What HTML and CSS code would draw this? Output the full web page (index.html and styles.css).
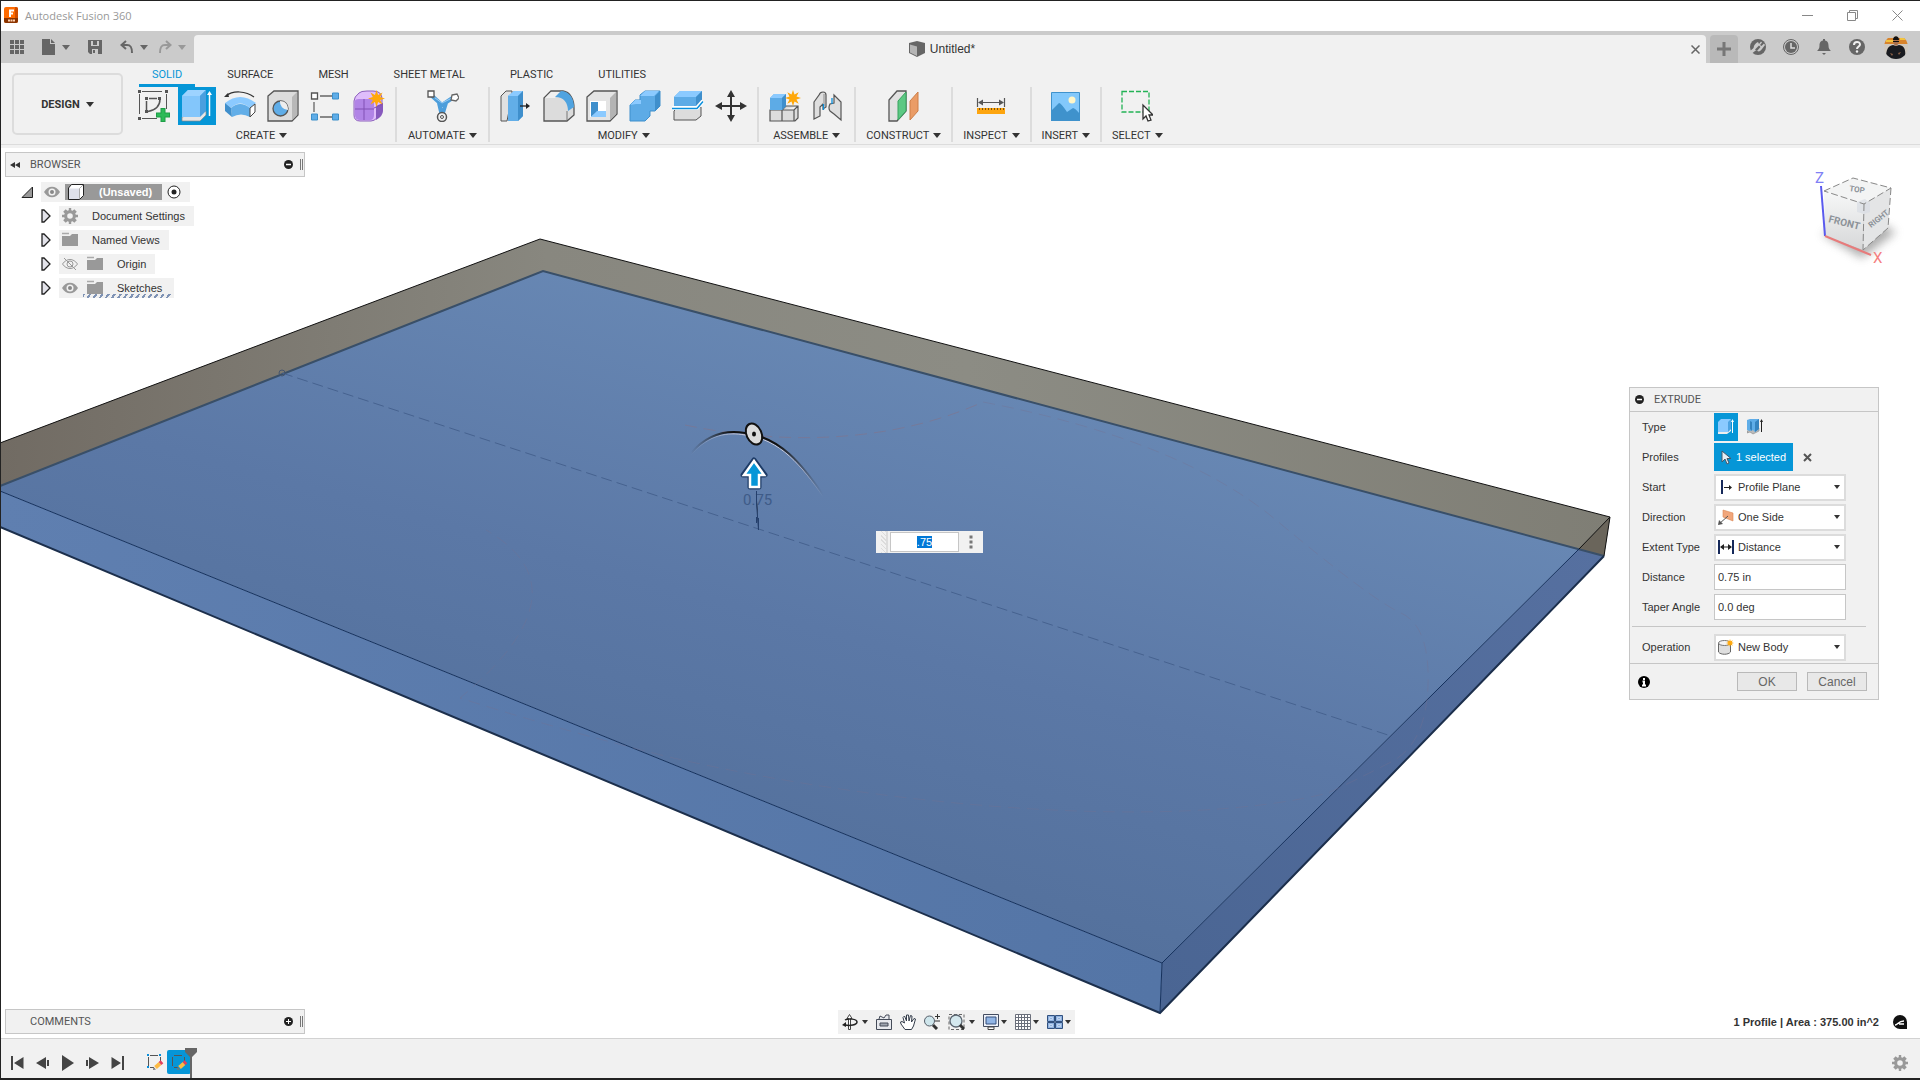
FILE: index.html
```html
<!DOCTYPE html>
<html lang="en">
<head>
    <meta charset="UTF-8">
    <meta name="viewport" content="width=device-width, initial-scale=1.0">
    <title>Autodesk Fusion 360</title>
    <link rel="stylesheet" href="styles.css">
</head>
<body>
    <!-- shared icons -->
    <svg class="defs" width="0" height="0" aria-hidden="true">
        <symbol id="gear" viewBox="0 0 16 16">
            <path fill-rule="evenodd" fill="#999" d="M6.8 0h2.4v2.2l1.4.6L12.300 1.200 14.800 3.700 13.200 5.400l.6 1.400H16v2.400h-2.200l-.6 1.400 1.600 1.700-2.500 2.500-1.700-1.600-1.400.6V16H6.800v-2.200l-1.400-.6-1.700 1.600-2.500-2.500 1.600-1.700-.6-1.400H0V6.800h2.200l.6-1.400L1.200 3.700l2.500-2.500 1.700 1.600 1.400-.6zM8 5.200a2.800 2.800 0 1 0 0 5.600 2.800 2.800 0 0 0 0-5.600z"/>
        </symbol>
        <symbol id="folder" viewBox="0 0 16 16">
            <path fill="#999" d="M0 4h8l2-2h6v12H0z"/>
            <path stroke="#aaa" stroke-width="1.500" d="M0 1.500h7"/>
        </symbol>
        <symbol id="eye" viewBox="0 0 16 16">
            <path fill="#999" d="M0 8c4-7 12-7 16 0-4 7-12 7-16 0z"/>
            <circle cx="8" cy="8" r="3.500" fill="#f1f1f1"/>
            <circle cx="8" cy="8" r="2" fill="#888"/>
        </symbol>
        <symbol id="branch" viewBox="0 0 10 14">
            <path fill="#e3e3ea" stroke="#222" stroke-width="1.300" d="M1 1h2l6 6-6 6H1z"/>
        </symbol>
        <symbol id="star" viewBox="0 0 16 16">
            <path fill="#ffa80a" d="M8 0l1.500 4.600 4.200-2.300-2.200 4.200L16 8l-4.500 1.500 2.200 4.200-4.200-2.300L8 16l-1.500-4.600-4.200 2.300 2.200-4.200L0 8l4.500-1.500-2.200-4.200 4.200 2.300z"/>
        </symbol>
        <symbol id="pencil-sketch" viewBox="0 0 18 18">
            <path fill="none" stroke="#555" d="M2.500 4v9M4 2.500h8M14.500 4v4M4 14.500h4"/>
            <path fill="#0a8fdc" d="M1 1h2v2H1zM13 1h2v2h-2zM1 13h2v2H1z"/>
            <path stroke="#fdbb45" stroke-width="4" d="M9.500 14.500l4.500-4"/>
            <path stroke="#e1405c" stroke-width="4" d="M14 10.500l2-1.800"/>
            <path fill="#777" d="M7 17l.5-3 2.500 2.500z"/>
        </symbol>
    </svg>

    <header class="titlebar">
        <svg class="logo" width="14" height="16" viewBox="0 0 14 16">
            <rect width="14" height="16" rx="2" fill="#ff6b00"/>
            <path fill="#8a3300" d="M0 11h14v3a2 2 0 0 1-2 2H2a2 2 0 0 1-2-2z"/>
            <path fill="#cf4d00" d="M11 0h1a2 2 0 0 1 2 2v9h-3z"/>
            <path fill="none" stroke="#fff" stroke-width="2" d="M6 10V3.500h4M6 6.500h3"/>
            <path stroke="#ffd2b0" stroke-width="2" stroke-dasharray="2 .5" d="M4 13.500h7"/>
        </svg>
        <h1>Autodesk Fusion 360</h1>
        <div class="window-controls">
            <button aria-label="Minimize"><svg width="11" height="11" viewBox="0 0 11 11"><path d="M0 5.500h11"/></svg></button>
            <button aria-label="Restore"><svg width="11" height="11" viewBox="0 0 11 11"><path d="M.5 2.500h8v8h-8zM2.500 2.500v-2h8v8h-2"/></svg></button>
            <button aria-label="Close"><svg width="11" height="11" viewBox="0 0 11 11"><path d="M.5.500l10 10M10.500.500l-10 10"/></svg></button>
        </div>
    </header>

    <nav class="appbar">
        <div class="quick">
            <button class="quick-button" aria-label="Data panel">
                <svg width="14" height="14" viewBox="0 0 14 14"><path fill="#666" d="M0 0h4v4H0zM5 0h4v4H5zM10 0h4v4h-4zM0 5h4v4H0zM5 5h4v4H5zM10 5h4v4h-4zM0 10h4v4H0zM5 10h4v4H5zM10 10h4v4h-4z"/></svg>
            </button>
            <button class="quick-button" aria-label="File">
                <svg width="14" height="16" viewBox="0 0 14 16"><path fill="#666" d="M0 0h8v5h5v11H0zM9 0l4 4H9z"/></svg>
                <span class="caret"></span>
            </button>
            <button class="quick-button" aria-label="Save">
                <svg width="14" height="14" viewBox="0 0 14 14"><path fill="#666" d="M0 0h14v14H2l-2-2z"/><path fill="#cbcbcb" d="M3 1h8v5H3zM4 9h6v5H4z"/><path fill="#666" d="M5 1h4v4H5zM5 10h2v3H5z"/></svg>
            </button>
            <div class="history">
                <button class="quick-button" aria-label="Undo">
                    <svg width="14" height="14" viewBox="0 0 14 14"><path fill="none" stroke="#666" stroke-width="2" d="M6 1L1.500 5 6 9M2 5h5c4 0 5 2.500 5 8"/></svg>
                    <span class="caret"></span>
                </button>
                <button class="quick-button" aria-label="Redo" disabled>
                    <svg width="14" height="14" viewBox="0 0 14 14"><path fill="none" stroke="#999" stroke-width="2" d="M8 1l4.500 4L8 9M12 5H7c-4 0-5 2.500-5 8"/></svg>
                    <span class="caret light"></span>
                </button>
            </div>
        </div>
        <div class="doc-tab">
            <span class="doc-name">
                <svg width="16" height="16" viewBox="0 0 16 16"><path fill="#666" d="M0 2l8-2 8 2v10l-8 4-8-4z"/><path fill="#b5b5b5" d="M1 3.500l7 2V15l-7-3.500z"/></svg>
                Untitled*
            </span>
            <button class="tab-close" aria-label="Close tab"><svg width="9" height="9" viewBox="0 0 9 9"><path stroke="#666" stroke-width="1.500" d="M.5.500l8 8M8.500.500l-8 8"/></svg></button>
        </div>
        <button class="new-tab" aria-label="New tab"><svg width="14" height="14" viewBox="0 0 14 14"><path stroke="#777" stroke-width="3" d="M7 0v14M0 7h14"/></svg></button>
        <div class="account">
            <button aria-label="Extensions">
                <svg width="16" height="16" viewBox="0 0 16 16"><circle cx="8" cy="8" r="8" fill="#666"/><path stroke="#cbcbcb" stroke-width="3" d="M0 14l5-4"/><path fill="#cbcbcb" d="M4 12c-1-4 0-7 4-9l1 2 2-2.500 1 1L10 6l1.500 1L14 4.500l1 1.500-3 4c-2 3-4 3-6 1z"/><path fill="#666" d="M5 10.500l4-4 1.500 1.500L7 12z"/></svg>
            </button>
            <button aria-label="Job status">
                <svg width="16" height="16" viewBox="0 0 16 16"><circle cx="8" cy="8" r="7.500" fill="none" stroke="#666"/><circle cx="8" cy="8" r="6" fill="#666"/><path fill="none" stroke="#ddd" stroke-width="1.500" d="M8 4v5h4"/></svg>
            </button>
            <button aria-label="Notifications">
                <svg width="16" height="16" viewBox="0 0 16 16"><path fill="#666" d="M7 0h2v1.500c3 .5 3.500 3 3.500 5 0 3 1 4 2.500 5.500H1c1.500-1.500 2.500-2.500 2.500-5.500 0-2 .5-4.500 3.500-5zM6 14h4l-2 2z"/></svg>
            </button>
            <button aria-label="Help">
                <svg width="16" height="16" viewBox="0 0 16 16"><circle cx="8" cy="8" r="8" fill="#666"/><path fill="none" stroke="#eee" stroke-width="2" d="M5 6c0-4 6-4 6-.5 0 2-3 2-3 4.500"/><circle cx="8" cy="12.500" r="1.200" fill="#eee"/></svg>
            </button>
            <button class="avatar" aria-label="Account">
                <svg width="24" height="24" viewBox="0 0 24 24">
                    <clipPath id="round"><circle cx="12" cy="12" r="12"/></clipPath>
                    <g clip-path="url(#round)">
                        <path fill="#cfc9c0" d="M0 0h24v24H0z"/><path fill="#d8842c" d="M0 3h24v6H0z"/><path fill="#f3c33e" d="M2 5h7v2H2zM16 3h7v2h-7z"/>
                        <path fill="#191b20" d="M2 24c0-10 2-13 7-14l3 1 3-1c6 1 7 5 6 14z"/>
                        <path fill="#a9714e" d="M9.500 5h5v4L12 11 9.500 9z"/><path fill="#111" d="M9 5c0-5 6-5 6 0zM9 6h6v1H9z"/>
                        <path fill="#8f6248" d="M6 18l3 1-1 2zM17 17l-3 1 1 2z"/>
                    </g>
                </svg>
            </button>
        </div>
    </nav>

    <section class="toolbar">
        <button class="workspace">DESIGN <span class="caret dark"></span></button>
        <div class="ribbon">
            <div class="tabs">
                <button class="tab active">SOLID</button>
                <button class="tab">SURFACE</button>
                <button class="tab">MESH</button>
                <button class="tab">SHEET METAL</button>
                <button class="tab">PLASTIC</button>
                <button class="tab">UTILITIES</button>
            </div>
            <div class="groups">
                <div class="group">
                    <div class="tools">
                        <button class="tool" aria-label="Create sketch">
                            <svg viewBox="0 0 32 32"><path fill="none" stroke="#555" stroke-dasharray="20 4" d="M1.500 4v22M4 1.500h22M28.500 4v15M4 28.500h15"/><path fill="none" stroke="#555" stroke-width="1.500" d="M8.500 11v9M11 8.500h8M22 9c0 6-4 11-12 12.500"/><path fill="#555" d="M0 0h3v3H0zM27 0h3v3h-3zM0 27h3v3H0zM7 7h3v3H7zM20 7h3v3h-3zM7 20h3v3H7z"/><path stroke="#1e9e47" stroke-width="5" d="M25 18v14M18 25h14"/><path stroke="#2dba58" stroke-width="3" d="M25 19v12M19 25h12"/></svg>
                        </button>
                        <button class="tool active" aria-label="Extrude">
                            <svg viewBox="0 0 32 32"><path fill="#e6e6e6" stroke="#888" stroke-width=".7" d="M1 27v4h18l6-6v-4z"/><path fill="#83c6fb" d="M1 6l6-6h18l-6 6v21H1z"/><path fill="#9dd3ff" d="M1 6l6-6h18l-6 6z"/><path fill="#4a9fdf" d="M19 6l6-6v21l-6 6z"/><path stroke="#fff" stroke-width="1.500" d="M28.500 26V3"/><path fill="#fff" d="M26 5l2.500-4L31 5z"/></svg>
                        </button>
                        <button class="tool" aria-label="Revolve">
                            <svg viewBox="0 0 32 32"><path fill="none" stroke="#333" stroke-width="1.200" d="M2 6C9 0 22 1 30 7"/><path fill="#333" d="M0 7l4-4 1 4z"/><path fill="#8bcaff" d="M1 13Q16 1 32 13l-6 5Q16 9 7 18z"/><path fill="#62aee8" d="M7 18q9-8 19 0v9q-9-5-18 0z"/><path fill="#3f8fcc" d="M1 13l6 5 1 9-7-6z"/><path fill="#fff" stroke="#444" d="M26 18l5-4v8l-5 5z"/></svg>
                        </button>
                        <button class="tool" aria-label="Hole">
                            <svg viewBox="0 0 32 32"><path fill="#dcdcdc" stroke="#555" stroke-width="1.300" d="M1 6l6-5h24v24l-6 6H1z"/><path fill="#b8b8b8" d="M25 7l5-5v23l-5 5z"/><circle cx="13.500" cy="18.500" r="7.500" fill="#5fade8" stroke="#555" stroke-width="1.300"/><path fill="#eee" d="M13 11a8 8 0 0 0 8 9c0-6-3-9-8-9z"/></svg>
                        </button>
                        <button class="tool" aria-label="Pattern">
                            <svg viewBox="0 0 32 32"><path stroke="#666" stroke-width="1.300" d="M10 6h12M4 12v10M10 27h12"/><path fill="#fff" stroke="#555" stroke-width="1.300" d="M1.500 3h6v6h-6z"/><path fill="#5fade8" stroke="#3d8fc9" d="M22.500 3h6v6h-6zM1.500 24h6v6h-6zM22.500 24h6v6h-6z"/></svg>
                        </button>
                        <button class="tool" aria-label="Create form">
                            <svg viewBox="0 0 32 32"><path fill="#dfbdfb" stroke="#8c60bd" d="M1 11q0-4 5-8 2-2 8-2h6q9 0 9 8v11q0 5-5 8-3 3-6 3H7q-6 0-6-6z"/><path fill="#b184e6" d="M2 11q0-2 4-2h11q4 0 4 4v12q0 5-4 5H7q-5 0-5-5z"/><path fill="#8759bd" d="M23 16l7-3v8q0 5-7 9z"/><path fill="none" stroke="#8150b5" d="M11 9v21M2 19h19M21 18l9-4"/><use href="#star" x="15" y="0" width="17" height="17"/></svg>
                        </button>
                    </div>
                    <button class="group-label">CREATE <span class="caret dark"></span></button>
                </div>
                <div class="group wide">
                    <div class="tools">
                        <button class="tool" aria-label="Automate">
                            <svg viewBox="0 0 32 32"><path fill="none" stroke="#4d9edb" stroke-width="4" d="M4 5l11 10 12-8M12 13l3 13M19 13l-4 13"/><path fill="none" stroke="#9dcff6" d="M4 5l11 8 12-6"/><path fill="#fff" stroke="#555" stroke-width="1.300" d="M1 1h6v6H1z"/><path fill="#fff" stroke="#666" stroke-width="1.300" d="M25 5l5-1 2 4-3 3-5-1z"/><circle cx="15" cy="27" r="4.500" fill="#f1f1f1" stroke="#555" stroke-width="1.500"/><circle cx="15" cy="27" r="1.500" fill="none" stroke="#555"/></svg>
                        </button>
                    </div>
                    <button class="group-label">AUTOMATE <span class="caret dark"></span></button>
                </div>
                <div class="group">
                    <div class="tools">
                        <button class="tool" aria-label="Press pull">
                            <svg viewBox="0 0 32 32"><path fill="#e1e1e1" stroke="#555" d="M1 6l5-5h6v5L7 31H1z"/><path fill="#62aee8" d="M8 6l6-5h9v25l-5 5H8z"/><path fill="#8bcaff" d="M8 6l6-5h9l-5 5z"/><path fill="#3f8fcc" d="M18 6l5-5v25l-5 5z"/><path stroke="#222" stroke-width="1.300" d="M20 16h8"/><path fill="#222" d="M26 13l4 3-4 3z"/></svg>
                        </button>
                        <button class="tool" aria-label="Fillet">
                            <svg viewBox="0 0 32 32"><path fill="#dcdcdc" stroke="#555" stroke-width="1.300" d="M1 8l7-7h12c7 1 11 8 11 17v7l-7 6H1z"/><path fill="#f0f0f0" d="M2 8l6-6h9l-5 6z"/><path fill="#4fa3e0" d="M12 7l6-6c7 0 13 6 13 16l-6 4c0-8-4-14-13-14z"/><path stroke="#777" d="M24 21v9"/></svg>
                        </button>
                        <button class="tool" aria-label="Shell">
                            <svg viewBox="0 0 32 32"><path fill="#e4e4e4" stroke="#555" stroke-width="1.300" d="M1 7l7-6h23v23l-7 7H1z"/><path fill="#b4b4b4" d="M24 8l6-6v22l-6 6z"/><path fill="#fff" d="M4 11h16v16H4z"/><path fill="#3f8fcc" d="M5 12h7v9l-7 6z"/><path fill="#8bcaff" d="M5 27l6-6h9v6z"/></svg>
                        </button>
                        <button class="tool" aria-label="Combine">
                            <svg viewBox="0 0 32 32"><path fill="#5dabe6" stroke="#3f8fcc" d="M1 15l5-5h5V5l5-4h15v15l-5 5h-5v5l-5 5H1z"/><path fill="#8bcaff" d="M1 15l5-5h6v4h-5zM11 6l5-5h14l-5 5z"/><path fill="#3f8fcc" d="M26 6l5-5v15l-5 5z"/></svg>
                        </button>
                        <button class="tool" aria-label="Split body">
                            <svg viewBox="0 0 32 32"><path fill="#dcdcdc" stroke="#555" d="M2 21l4-4h23v9l-5 4H2z"/><path fill="#5dabe6" d="M2 7l6-6h22v10l-6 5H2z"/><path fill="#8bcaff" d="M2 7l6-6h22l-6 6z"/><path fill="#3f8fcc" d="M24 7l6-6v10l-6 5z"/><path fill="none" stroke="#fff" stroke-width="4" d="M0 18h25l6-7"/><path fill="none" stroke="#0a8fdc" stroke-width="1.500" d="M0 18.500h25l6-7"/></svg>
                        </button>
                        <button class="tool" aria-label="Move">
                            <svg viewBox="0 0 32 32"><path stroke="#333" stroke-width="2" d="M16 4v24M4 16h24"/><path fill="#333" d="M16 0l4 7h-8zM16 32l4-7h-8zM0 16l7-4v8zM32 16l-7-4v8z"/></svg>
                        </button>
                    </div>
                    <button class="group-label">MODIFY <span class="caret dark"></span></button>
                </div>
                <div class="group">
                    <div class="tools">
                        <button class="tool" aria-label="New component">
                            <svg viewBox="0 0 32 32"><path fill="#ddd" stroke="#555" stroke-width="1.200" d="M1 20h12l4-4h12v12l-3 3H1zM13 20v11M13 20h12l4-4M25 20v11"/><path fill="#5dabe6" d="M1 8l4-4h12v12l-4 4H1z"/><path fill="#8bcaff" d="M1 8l4-4h12l-4 4z"/><path fill="#3f8fcc" d="M13 8l4-4v12l-4 4z"/><use href="#star" x="16" y="0" width="16" height="16"/></svg>
                        </button>
                        <button class="tool" aria-label="Joint">
                            <svg viewBox="0 0 32 32"><path fill="#dedede" stroke="#555" stroke-width="1.200" d="M2 12l5-7q1-3 4-3 3 0 3 3v12l-3 2v-5l-3 3v9l-6 3zM29 30V12l-7-7v8l-4 1q-2 4 0 7l4 3z"/><path fill="#b5b5b5" d="M11 4h2v12l-2 2z"/><path stroke="#0a8fdc" stroke-width="1.300" d="M11.500 14v6M20 14V8"/></svg>
                        </button>
                    </div>
                    <button class="group-label">ASSEMBLE <span class="caret dark"></span></button>
                </div>
                <div class="group">
                    <div class="tools">
                        <button class="tool" aria-label="Offset plane">
                            <svg viewBox="0 0 32 32"><path fill="#e1e1e1" stroke="#555" stroke-width="1.300" d="M1 10l8-9h9v20l-9 10H1z"/><path fill="#5cc883" stroke="#37a35f" d="M10 11l8-9v19l-8 9z"/><path fill="#ea9c66" stroke="#cd7e48" d="M22 11l8-9v19l-8 9z"/></svg>
                        </button>
                    </div>
                    <button class="group-label">CONSTRUCT <span class="caret dark"></span></button>
                </div>
                <div class="group">
                    <div class="tools">
                        <button class="tool" aria-label="Measure">
                            <svg viewBox="0 0 32 32"><path fill="#fda50f" d="M2 18h28v6H2z"/><path stroke="#7a5310" stroke-dasharray="1 2" stroke-width="2" d="M4 19h25"/><path stroke="#555" stroke-width="1.200" d="M2.500 8v9M29.500 8v9M4 12.500h24"/><path fill="#555" d="M3 12.500l5-3v6zM29 12.500l-5-3v6z"/></svg>
                        </button>
                    </div>
                    <button class="group-label">INSPECT <span class="caret dark"></span></button>
                </div>
                <div class="group">
                    <div class="tools">
                        <button class="tool" aria-label="Insert canvas">
                            <svg viewBox="0 0 32 32"><path fill="#82c8fb" stroke="#3f92cc" d="M1.500 2.500h28v28h-28z"/><path fill="#3f92cc" d="M1 21q6-6 8-8 2 0 8 9l6-4q2 0 7 6v7H1z"/><circle cx="22" cy="10" r="3.500" fill="#fff6c8"/></svg>
                        </button>
                    </div>
                    <button class="group-label">INSERT <span class="caret dark"></span></button>
                </div>
                <div class="group">
                    <div class="tools">
                        <button class="tool" aria-label="Select">
                            <svg viewBox="0 0 32 32"><path fill="none" stroke="#23b255" stroke-width="1.300" stroke-dasharray="5 2" d="M1 1.500h27V22H1z"/><path fill="#fff" stroke="#333" stroke-width="1.300" d="M22 15v14l3-3 2 5 3-1-2-5h4z"/></svg>
                        </button>
                    </div>
                    <button class="group-label">SELECT <span class="caret dark"></span></button>
                </div>
            </div>
        </div>
    </section>

    <main class="viewport">
        <svg class="scene" viewBox="1 148 1919 890" preserveAspectRatio="xMinYMin slice">
            <defs>
                <linearGradient id="top-face" gradientUnits="userSpaceOnUse" x1="760" y1="300" x2="600" y2="880">
                    <stop offset="0" stop-color="#6888b4"/>
                    <stop offset=".5" stop-color="#5b78a6"/>
                    <stop offset="1" stop-color="#526f9a"/>
                </linearGradient>
                <linearGradient id="front-face" gradientUnits="userSpaceOnUse" x1="0" y1="500" x2="1160" y2="980">
                    <stop offset="0" stop-color="#5f7fb0"/>
                    <stop offset="1" stop-color="#5475a6"/>
                </linearGradient>
                <linearGradient id="side-face" gradientUnits="userSpaceOnUse" x1="1600" y1="550" x2="1160" y2="1000">
                    <stop offset="0" stop-color="#5670a0"/>
                    <stop offset="1" stop-color="#4a6593"/>
                </linearGradient>
                <linearGradient id="back" gradientUnits="userSpaceOnUse" x1="0" y1="460" x2="1610" y2="460">
                    <stop offset="0" stop-color="#716b63"/>
                    <stop offset=".34" stop-color="#88877f"/>
                    <stop offset=".6" stop-color="#8c8c84"/>
                    <stop offset="1" stop-color="#7f7e75"/>
                </linearGradient>
                <linearGradient id="arc" gradientUnits="userSpaceOnUse" x1="691" y1="430" x2="823" y2="430">
                    <stop offset="0" stop-color="#222" stop-opacity="0"/>
                    <stop offset=".3" stop-color="#111"/>
                    <stop offset=".65" stop-color="#111"/>
                    <stop offset="1" stop-color="#333" stop-opacity="0"/>
                </linearGradient>
                <linearGradient id="arc-light" gradientUnits="userSpaceOnUse" x1="691" y1="430" x2="823" y2="430">
                    <stop offset="0" stop-color="#ccd" stop-opacity="0"/>
                    <stop offset=".4" stop-color="#ccd"/>
                    <stop offset=".8" stop-color="#ccd"/>
                    <stop offset="1" stop-color="#ccd" stop-opacity="0"/>
                </linearGradient>
                <linearGradient id="cube-front" x1="0" y1="0" x2="0" y2="1"><stop offset="0" stop-color="#f7f8f8"/><stop offset="1" stop-color="#d6d7d8"/></linearGradient>
                <filter id="soft" x="-50%" y="-50%" width="200%" height="200%"><feGaussianBlur stdDeviation="5"/></filter>
            </defs>

            <!-- extruded slab -->
            <path fill="url(#back)" d="M0 443L540 239l1070 278-6 39L543 271 0 486z"/>
            <path fill="#6a655b" d="M1610 517l-6 39-25-7z"/>
            <path fill="url(#top-face)" d="M0 486l543-215 1036 278-417 414L0 491z"/>
            <path fill="url(#front-face)" d="M0 491l1162 472-2 50L0 527z"/>
            <path fill="url(#side-face)" d="M1162 963l417-414 25 7-444 457z"/>
            <path fill="none" stroke="#394f68" stroke-width="2" d="M0 486l543-215 1061 285"/>
            <path fill="none" stroke="#1c2f4c" stroke-width="2" d="M0 527l1160 486 444-457"/>
            <path fill="none" stroke="#14305c" d="M0 491l1162 472-2 50M1162 963l417-414"/>
            <path fill="none" stroke="#111" d="M0 443l540-204 1070 278-6 39M1610 517l-31 32"/>

            <!-- sketch geometry -->
            <path fill="none" stroke="#46628f" stroke-dasharray="11 5" d="M282 373l1109 363"/>
            <circle cx="282" cy="373" r="3" fill="none" stroke="#44556e"/>
            <path fill="none" stroke="#82738a" stroke-dasharray="12 7" opacity=".6" d="M685 425C780 445 890 444 983 402"/>
            <path fill="none" stroke="#75708f" stroke-dasharray="12 7" opacity=".35" d="M983 402Q1180 440 1276 520T1401 613 1428 685 1391 762 1328 793C1180 830 900 810 669 757Q560 730 460 698 590 590 486 530"/>

            <!-- manipulator -->
            <text class="dimension" x="743" y="505">0.75</text>
            <path stroke="#243f6c" d="M756.500 491v12l2 27M758.500 518v12M756.500 523v-6"/>
            <path fill="none" stroke="url(#arc-light)" d="M691 455c18-21 37-23 54-20 35 4 57 31 79 63"/>
            <path fill="none" stroke="url(#arc)" stroke-width="2" d="M691 453c18-21 37-23 54-20 35 4 57 31 79 63"/>
            <ellipse cx="754" cy="434" rx="7.500" ry="11" fill="#dcdcdc" stroke="#111" stroke-width="2" transform="rotate(-25 754 434)"/>
            <ellipse cx="754" cy="434" rx="2" ry="2.500" fill="#111"/>
            <path fill="none" stroke="#1d3b66" stroke-width="5" stroke-linejoin="round" d="M754 460l11 15h-6v12h-9v-12h-7z"/>
            <path fill="#0696d7" stroke="#fff" stroke-width="2.500" d="M754 461l10 14h-5v12h-9v-12h-6z"/>

            <!-- view cube -->
            <path fill="#777" opacity=".6" filter="url(#soft)" d="M1822 234l40 24 34-26-30-16z"/>
            <path fill="#f3f4f4" d="M1824 191l29-13 38 10-27 16z"/>
            <path fill="url(#cube-front)" d="M1824 191l40 13-1 46-38-14z"/>
            <path fill="#e4e5e6" d="M1864 204l27-16-3 40-25 22z"/>
            <path fill="#d9dde4" opacity=".7" d="M1857 202l8-3 5 4v9l-6 2-7-2z"/>
            <path fill="none" stroke="#888" stroke-dasharray="7 3" d="M1824 191l29-13 38 10-27 16zM1864 204l-1 46M1891 188l-3 40-25 22"/>
            <path fill="none" stroke="#5a5aee" stroke-width="2" d="M1821 186l4 50"/>
            <path fill="none" stroke="#e77b7b" stroke-width="2" d="M1825 236l46 19"/>
            <text class="cube-text" x="1828" y="222" transform="rotate(14 1828 222)">FRONT</text>
            <text class="cube-text small" x="1871" y="228" transform="rotate(-38 1871 228)">RIGHT</text>
            <text class="cube-text small" x="1849" y="191" transform="rotate(8 1849 191)">TOP</text>
            <text class="axis z" x="1815" y="183">Z</text>
            <text class="axis x" x="1873" y="263">X</text>
        </svg>

        <aside class="left">
            <div class="browser">
                <div class="panel-bar">
                    <svg width="10" height="6" viewBox="0 0 10 6"><path fill="#333" d="M5 0v6L0 3zM10 0v6L5 3z"/></svg>
                    <h2>BROWSER</h2>
                    <button class="panel-toggle" aria-label="Collapse browser"><svg width="9" height="9" viewBox="0 0 9 9"><circle cx="4.500" cy="4.500" r="4.500" fill="#222"/><path stroke="#fff" stroke-width="1.500" d="M2 4.500h5"/></svg></button>
                    <span class="grip"></span>
                </div>
                <ul class="tree">
                    <li class="root">
                        <svg width="12" height="12" viewBox="0 0 12 12"><path fill="#999" stroke="#222" d="M11.500 1v10.500H1z"/></svg>
                        <span class="node">
                            <svg width="16" height="16"><use href="#eye"/></svg>
                            <span class="selected">
                                <svg width="16" height="16" viewBox="0 0 16 16"><path fill="#fff" stroke="#222" d="M.5 4l3-3.500h12v11l-4 4H.5z"/><path fill="#dfe1ea" d="M1 4.500h10.500V15H1z"/><path fill="none" stroke="#aaa" d="M11.500 15V4.500L15 1"/></svg>
                                (Unsaved)
                            </span>
                            <svg width="14" height="14" viewBox="0 0 14 14"><circle cx="7" cy="7" r="6" fill="#fff" stroke="#222"/><circle cx="7" cy="7" r="2.500" fill="#222"/></svg>
                        </span>
                    </li>
                    <li><svg width="10" height="14"><use href="#branch"/></svg><span class="node wide"><svg width="16" height="16"><use href="#gear"/></svg>Document Settings</span></li>
                    <li><svg width="10" height="14"><use href="#branch"/></svg><span class="node wide"><svg width="16" height="16"><use href="#folder"/></svg>Named Views</span></li>
                    <li><svg width="10" height="14"><use href="#branch"/></svg><span class="node"><svg width="16" height="16" viewBox="0 0 16 16"><path fill="none" stroke="#999" d="M.5 8c4-6 11-6 15 0-4 6-11 6-15 0zM2 2l12 12"/><circle cx="8" cy="8" r="3" fill="none" stroke="#999"/></svg><span class="entry"><svg width="16" height="16"><use href="#folder"/></svg>Origin</span></span></li>
                    <li><svg width="10" height="14"><use href="#branch"/></svg><span class="node"><svg width="16" height="16"><use href="#eye"/></svg><span class="entry hatched"><svg width="16" height="16"><use href="#folder"/></svg>Sketches</span></span></li>
                </ul>
            </div>
            <div class="panel-bar comments">
                <h2>COMMENTS</h2>
                <button class="panel-toggle" aria-label="Expand comments"><svg width="9" height="9" viewBox="0 0 9 9"><circle cx="4.500" cy="4.500" r="4.500" fill="#222"/><path stroke="#fff" d="M2 4.500h5M4.500 2v5"/></svg></button>
                <span class="grip"></span>
            </div>
        </aside>

        <div class="nav-tools">
            <button class="orbit" aria-label="Orbit"><svg width="16" height="16" viewBox="0 0 16 16"><path fill="#fff" stroke="#444" d="M6.500 15.500v-11H5l2.500-4 2.500 4H8.500v11z"/><path fill="none" stroke="#222" stroke-width="1.500" d="M3 6c3-2 12-1 12 2S8 12 3 11"/><path fill="#222" d="M0 11l4-3v5z"/></svg><span class="caret dark"></span></button>
            <button aria-label="Look at"><svg width="16" height="16" viewBox="0 0 16 16"><path fill="#e7e9ee" stroke="#444b58" d="M.5 5.500h15v10H.5zM3 5l1-3 4 2 2-3 3 0v4"/><path fill="#9fa5b0" stroke="#444b58" d="M4 9h8v3H4z"/></svg></button>
            <button aria-label="Pan"><svg width="16" height="16" viewBox="0 0 16 16"><path fill="#fff" stroke="#333c4a" d="M5 15.500L1 10 .5 8l1.500-.5L4.500 9 3 3.500 4.500 2l2 5L6.500 1h2l.5 6 1.500-5.500 1.500.500-.5 6L14 4.500l1.500.500-2 7-2 3.500z"/></svg></button>
            <button aria-label="Zoom"><svg width="16" height="16" viewBox="0 0 16 16"><circle cx="5.500" cy="7" r="5" fill="#cfe6ec" stroke="#555d68"/><path stroke="#333" stroke-width="3" d="M9 11l4 4"/><path stroke="#333" d="M13.500 0v5M11 2.500h5M11 7h5"/></svg></button>
            <button class="fit" aria-label="Fit"><svg width="17" height="16" viewBox="0 0 17 16"><path fill="none" stroke="#666" stroke-dasharray="3 2" d="M1 .5h15v15H1z"/><circle cx="8" cy="7" r="6" fill="#d4e8ee" stroke="#5b6570" stroke-width="1.300"/><path stroke="#333" stroke-width="3" d="M12 11l4 4"/></svg><span class="caret dark"></span></button>
            <button aria-label="Display settings"><svg width="16" height="16" viewBox="0 0 16 16"><path fill="#eef2fa" stroke="#444d61" d="M.5.500h15v12H.500z"/><path fill="#91b5e5" stroke="#36517c" d="M3 3h10v7H3z"/><path fill="#fff" stroke="#444" d="M5 13h6v2.500H5z"/></svg><span class="caret dark"></span></button>
            <button aria-label="Grid and snaps"><svg width="16" height="16" viewBox="0 0 16 16"><path fill="#fff" stroke="#6a6f7b" d="M.5.500h15v15H.500zM3.500 0v16M6.500 0v16M9.500 0v16M12.500 0v16M0 3.500h16M0 6.500h16M0 9.500h16M0 12.500h16"/></svg><span class="caret dark"></span></button>
            <button aria-label="Viewports"><svg width="16" height="14" viewBox="0 0 16 14"><path fill="#8fb2e0" stroke="#31517f" d="M.5.500h7v6h-7zM8.500.500h7v6h-7zM.5 7.500h7v6h-7zM8.500 7.500h7v6h-7z"/><path fill="none" stroke="#c2d6f0" d="M2.500 2.500h3v2h-3zM10.500 2.500h3v2h-3zM2.500 9.500h3v2h-3zM10.500 9.500h3v2h-3z"/></svg><span class="caret dark"></span></button>
        </div>

        <div class="status">
            1 Profile | Area : 375.00 in^2
            <svg width="14" height="14" viewBox="0 0 14 14"><path fill="#111" d="M7 0a7 7 0 1 0 0 14h7V7a7 7 0 0 0-7-7z"/><path fill="none" stroke="#fff" stroke-width="1.500" d="M2 10c3 0 3-4 9-4M6 9h5"/></svg>
        </div>

        <form class="value-input">
            <span class="handle"></span>
            <input id="distance-value" type="text" value=".75" aria-label="Distance">
            <button type="button" aria-label="More options"><svg width="4" height="14" viewBox="0 0 4 14"><path fill="#777" d="M.5.500h3v3h-3zM.5 5.500h3v3h-3zM.5 10.500h3v3h-3z"/></svg></button>
        </form>

        <form class="dialog">
            <h2><svg width="9" height="9" viewBox="0 0 9 9"><circle cx="4.500" cy="4.500" r="4.500" fill="#222"/><path stroke="#fff" stroke-width="1.500" d="M2 4.500h5"/></svg>EXTRUDE</h2>
            <div class="fields">
                <div class="field">
                    <span class="field-label">Type</span>
                    <button type="button" class="type active" aria-label="Extrude"><svg width="16" height="16" viewBox="0 0 16 16"><path fill="#eee" d="M0 12v3h9l4-3v-2z"/><path fill="#8bcaff" d="M0 3l3-3h10v10l-3 3H0z"/><path fill="#4da3e2" d="M10 3l3-3v10l-3 3z"/><path stroke="#fff" d="M14.500 14V2"/><path fill="#fff" d="M13 3l1.500-3L16 3z"/></svg></button>
                    <button type="button" class="type" aria-label="Thin extrude"><svg width="16" height="16" viewBox="0 0 16 16"><path fill="#bbb" stroke="#777" stroke-width=".5" d="M0 12v2l3-1 3 2 6-3v-3z"/><path fill="#5fade8" d="M0 1l3-1h9v10l-4 3-2-2-3 1-3-1z"/><path fill="#3583bf" d="M3 2l2 1v9l-2-2zM8 3l4-3v10l-4 3z"/><path stroke="#222" d="M14.500 13V2"/><path fill="#222" d="M13 3l1.500-3L16 3z"/></svg></button>
                </div>
                <div class="field">
                    <span class="field-label">Profiles</span>
                    <button type="button" class="selection"><svg width="11" height="15" viewBox="0 0 11 15"><path fill="#e7eef4" stroke="#45596b" d="M1 1v11l3-3 2 5 2-1-2-4.500h4z"/></svg>1 selected</button>
                    <button type="button" class="clear" aria-label="Clear selection"><svg width="9" height="9" viewBox="0 0 9 9"><path stroke="#555" stroke-width="2" d="M1 1l7 7M8 1L1 8"/></svg></button>
                </div>
                <div class="field">
                    <label class="field-label" for="start">Start</label>
                    <div class="dropdown">
                        <svg width="16" height="16" viewBox="0 0 16 16"><path stroke="#16295a" stroke-width="2" d="M4 1v14"/><path stroke="#222" d="M6 8.500h7"/><path fill="#222" d="M11 6l3 2.500-3 2.500z"/></svg>
                        <select id="start"><option>Profile Plane</option></select>
                        <span class="caret dark"></span>
                    </div>
                </div>
                <div class="field">
                    <label class="field-label" for="direction">Direction</label>
                    <div class="dropdown">
                        <svg width="16" height="16" viewBox="0 0 16 16"><path fill="#f1a67b" stroke="#da8754" stroke-width=".6" d="M5 1l10 3v8L5 8z"/><path stroke="#555" d="M1 15l9-8"/><path fill="#555" d="M0 16l1-5 4 4z"/></svg>
                        <select id="direction"><option>One Side</option></select>
                        <span class="caret dark"></span>
                    </div>
                </div>
                <div class="field">
                    <label class="field-label" for="extent">Extent Type</label>
                    <div class="dropdown">
                        <svg width="16" height="16" viewBox="0 0 16 16"><path stroke="#16295a" stroke-width="2" d="M1 1v14M15 1v14"/><path stroke="#222" d="M3 8h10"/><path fill="#222" d="M2 8l4-3v6zM14 8l-4-3v6z"/></svg>
                        <select id="extent"><option>Distance</option></select>
                        <span class="caret dark"></span>
                    </div>
                </div>
                <div class="field">
                    <label class="field-label" for="distance">Distance</label>
                    <input id="distance" type="text" value="0.75 in">
                </div>
                <div class="field">
                    <label class="field-label" for="taper">Taper Angle</label>
                    <input id="taper" type="text" value="0.0 deg">
                </div>
                <hr>
                <div class="field">
                    <label class="field-label" for="operation">Operation</label>
                    <div class="dropdown">
                        <svg width="16" height="16" viewBox="0 0 16 16"><path fill="#dedede" stroke="#666" d="M.5 4v9c2 3 10 3 12 0V4"/><ellipse cx="6.500" cy="4" rx="6" ry="2.500" fill="#f4f4f4" stroke="#777"/><use href="#star" x="8" y="0" width="8" height="8"/></svg>
                        <select id="operation"><option>New Body</option></select>
                        <span class="caret dark"></span>
                    </div>
                </div>
            </div>
            <div class="actions">
                <svg width="12" height="12" viewBox="0 0 12 12"><circle cx="6" cy="6" r="6" fill="#000"/><path fill="none" stroke="#fff" stroke-width="2" d="M6 2v2M4.500 5.500H6V9M4 9.500h4"/></svg>
                <button type="button">OK</button>
                <button type="button">Cancel</button>
            </div>
        </form>
    </main>

    <footer class="timeline">
        <div class="playback">
            <button aria-label="To start"><svg width="13" height="14" viewBox="0 0 13 14"><path fill="#444" d="M0 0h2v14H0zM12.500 1v12L3 7z"/></svg></button>
            <button aria-label="Step back"><svg width="13" height="14" viewBox="0 0 13 14"><path fill="#444" d="M10 1v12L0 7zM11 4h2v6h-2z"/></svg></button>
            <button aria-label="Play"><svg width="13" height="16" viewBox="0 0 13 16"><path fill="#444" d="M1 0v16l12-8z"/></svg></button>
            <button aria-label="Step forward"><svg width="13" height="14" viewBox="0 0 13 14"><path fill="#444" d="M3 1v12l10-6zM0 4h2v6H0z"/></svg></button>
            <button aria-label="To end"><svg width="13" height="14" viewBox="0 0 13 14"><path fill="#444" d="M11 0h2v14h-2zM.5 1v12L10 7z"/></svg></button>
        </div>
        <div class="features">
            <button class="feature" aria-label="Sketch1"><svg width="18" height="18"><use href="#pencil-sketch"/></svg></button>
            <button class="feature active" aria-label="Sketch2"><svg width="18" height="18"><use href="#pencil-sketch"/></svg></button>
            <svg class="marker" width="12" height="30" viewBox="0 0 12 30"><path fill="#666" d="M0 0h12v4L7 9v21H5V9L0 4z"/></svg>
        </div>
        <button class="settings" aria-label="Timeline settings"><svg width="16" height="16"><use href="#gear"/></svg></button>
    </footer>

    <script>
        const valueInput = document.getElementById("distance-value");
        valueInput.focus();
        valueInput.select();
    </script>
</body>
</html>
```

FILE: styles.css
```css
* {
    margin: 0;
    padding: 0;
    box-sizing: border-box;
}

body {
    display: flex;
    flex-direction: column;
    min-height: 100vh;
    border: solid #222;
    border-width: 1px 0 2px 1px;
    background-color: white;
    color: #333;
    font-family: "Liberation Sans", Arial, sans-serif;
    font-size: 11px;
    overflow: hidden;
}

button {
    display: flex;
    align-items: center;
    justify-content: center;
    border: none;
    background: none;
    color: inherit;
    font: inherit;
}

svg {
    display: block;
    flex-shrink: 0;
}

.defs {
    position: absolute;
}

h2 {
    font-family: Roboto, sans-serif;
    font-size: 11px;
    font-weight: normal;
    color: #555;
}

.caret {
    border: 4px solid transparent;
    border-top: 5px solid #666;
    border-bottom: none;
}

.caret.dark {
    border-top-color: #333;
}

.caret.light {
    border-top-color: #999;
}

/* title bar */
.titlebar {
    display: flex;
    align-items: center;
    height: 30px;
    padding: 0 0 2px 3px;
}

.titlebar h1 {
    margin-left: 7px;
    font-family: "Open Sans", sans-serif;
    font-size: 11px;
    font-weight: normal;
    color: #999;
}

.window-controls {
    display: flex;
    margin-left: auto;
}

.window-controls button {
    width: 45px;
    height: 28px;
}

.window-controls path {
    fill: none;
    stroke: #888;
}

/* application bar */
.appbar {
    display: flex;
    align-items: flex-end;
    height: 32px;
    background-color: #cbcbcb;
}

.quick {
    display: flex;
    align-items: center;
    gap: 18px;
    width: 193px;
    height: 32px;
    padding-left: 9px;
}

.quick-button {
    gap: 6px;
}

.history {
    display: flex;
    gap: 10px;
}

.doc-tab {
    display: flex;
    align-items: center;
    flex: 1;
    height: 28px;
    padding-right: 6px;
    border-radius: 4px 4px 0 0;
    background-color: #f1f1f1;
}

.doc-name {
    display: flex;
    align-items: center;
    justify-content: center;
    gap: 5px;
    flex: 1;
    font-size: 12px;
}

.tab-close {
    width: 10px;
}

.new-tab {
    width: 28px;
    height: 28px;
    margin-left: 4px;
    border-radius: 4px 4px 0 0;
    background-color: #b9b9b9;
}

.account {
    display: flex;
    align-items: center;
    gap: 17px;
    height: 32px;
    padding: 0 12px;
}

.account .avatar {
    margin-left: 2px;
}

/* ribbon */
.toolbar {
    display: flex;
    border-bottom: 3px solid #f1f1f1;
    background-color: #f1f1f1;
    box-shadow: inset 0 -1px #dcdcdc;
    font-family: Roboto, sans-serif;
}

.workspace {
    gap: 6px;
    width: 111px;
    height: 62px;
    margin: 10px 5px 10px 11px;
    border: 2px solid #dcdcdc;
    border-radius: 5px;
    font-weight: bold;
}

.tabs {
    display: flex;
    gap: 19px;
    height: 24px;
    padding-left: 11px;
}

.tab {
    padding: 1px 13px 0;
    border-bottom: 3px solid transparent;
}

.tab.active {
    border-bottom-color: #0696d7;
    color: #0696d7;
}

.groups {
    display: flex;
}

.group {
    display: flex;
    flex-direction: column;
    align-items: center;
    gap: 4px;
    padding: 0 7px;
    border-right: 2px solid #dcdcdc;
    height: 55px;
}

.group.wide {
    padding: 0 8px;
}

.group:last-child {
    border-right: none;
}

.tools {
    display: flex;
    gap: 5px;
}

.tool {
    width: 38px;
    height: 38px;
}

.tool.active {
    background-color: #0696d7;
}

.tool svg {
    width: 32px;
    height: 32px;
}

.group-label {
    gap: 4px;
    padding: 0 3px;
}

/* modelling area */
.viewport {
    position: relative;
    display: flex;
    align-items: flex-end;
    flex: 1;
    padding: 4px;
}

.scene {
    position: absolute;
    top: 0;
    left: 0;
    width: 100%;
    height: 100%;
}

.dimension {
    fill: #3e5b88;
    font-family: Roboto, sans-serif;
    font-size: 15px;
}

.cube-text {
    fill: #8c9298;
    font-family: Roboto, sans-serif;
    font-size: 10px;
    font-weight: bold;
}

.cube-text.small {
    font-size: 8px;
}

.axis {
    font-family: Roboto, sans-serif;
    font-size: 15px;
}

.axis.z {
    fill: #8080f5;
}

.axis.x {
    fill: #f58080;
}

.left {
    position: relative;
    display: flex;
    flex-direction: column;
    justify-content: space-between;
    align-self: stretch;
    flex: 1;
}

.panel-bar {
    display: flex;
    align-items: center;
    gap: 10px;
    width: 300px;
    height: 25px;
    padding: 0 1px 0 4px;
    border: 1px solid #c6c6c6;
    background-color: #f1f1f1;
}

.panel-bar.comments {
    padding-left: 24px;
}

.panel-toggle {
    margin-left: auto;
}

.grip {
    width: 3px;
    height: 11px;
    margin-left: -3px;
    border: solid #777;
    border-width: 0 1px;
}

.tree {
    display: flex;
    flex-direction: column;
    gap: 4px;
    padding: 5px 0 0 36px;
    list-style: none;
}

.tree li {
    display: flex;
    align-items: center;
    gap: 8px;
}

.tree .root {
    margin-left: -20px;
}

.node {
    display: flex;
    align-items: center;
    gap: 5px;
    height: 20px;
    padding-right: 9px;
    padding-left: 3px;
    background-color: #f1f1f1;
}

.node.wide {
    gap: 14px;
}

.entry {
    display: flex;
    align-items: center;
    gap: 14px;
    height: 20px;
    padding-left: 4px;
}

.hatched {
    margin-right: -7px;
    padding-right: 10px;
    background: repeating-linear-gradient(125deg, #7f93b5 0 2px, transparent 2px 5px) bottom / 100% 4px no-repeat;
}

.selected {
    display: flex;
    align-items: center;
    gap: 15px;
    height: 16px;
    padding: 0 10px 0 3px;
    background-color: #999;
    color: white;
    font-weight: bold;
}

/* navigation bar */
.nav-tools {
    position: relative;
    display: flex;
    align-items: center;
    gap: 8px;
    height: 24px;
    padding: 0 4px;
    background-color: #f1f1f1;
}

.nav-tools button {
    gap: 2px;
}

.nav-tools .orbit,
.nav-tools .fit {
    gap: 4px;
}

.nav-tools .caret,
.dropdown .caret {
    border-width: 4px 3px 0;
}

.status {
    position: relative;
    display: flex;
    align-items: center;
    justify-content: flex-end;
    gap: 14px;
    flex: 1;
    height: 24px;
    padding-right: 9px;
    font-weight: bold;
}

.value-input {
    position: absolute;
    top: 383px;
    left: 875px;
    display: flex;
    align-items: center;
    width: 107px;
    height: 22px;
    background-color: #f1f1f1;
}

.value-input .handle {
    width: 7px;
    height: 22px;
    margin-left: 5px;
    border-right: 2px solid #dcdcdc;
    background: repeating-linear-gradient(45deg, #dcdcdc 0 1px, transparent 1px 3px);
}

.value-input input {
    width: 69px;
    height: 20px;
    margin-left: 2px;
    border: 1px solid #c6c6c6;
    outline: none;
    font: inherit;
    text-align: center;
}

.value-input input::selection {
    background-color: #0078d7;
    color: white;
}

.value-input button {
    flex: 1;
}

/* extrude dialog */
.dialog {
    position: absolute;
    top: 239px;
    right: 41px;
    width: 250px;
    border: 1px solid #c6c6c6;
    background-color: #f1f1f1;
}

.dialog h2 {
    display: flex;
    align-items: center;
    gap: 10px;
    height: 24px;
    padding-left: 5px;
    border-bottom: 1px solid #c6c6c6;
}

.fields {
    padding: 0 12px 1px;
}

.field {
    display: flex;
    align-items: center;
    height: 30px;
}

.field-label {
    width: 72px;
}

.type {
    width: 24px;
    height: 28px;
    margin-right: 5px;
}

.type.active {
    background-color: #0696d7;
}

.selection {
    gap: 4px;
    width: 79px;
    height: 28px;
    background-color: #0696d7;
    color: white;
}

.clear {
    margin-left: 10px;
}

.dropdown {
    display: flex;
    align-items: center;
    gap: 4px;
    width: 132px;
    height: 27px;
    padding: 0 4px 0 2px;
    border: 2px solid #dcdcdc;
    background-color: white;
}

.dropdown select {
    appearance: none;
    flex: 1;
    min-width: 0;
    border: none;
    background: none;
    color: inherit;
    font: inherit;
}

.field input {
    width: 132px;
    height: 26px;
    padding: 0 3px;
    border: 1px solid #c6c6c6;
    color: inherit;
    font: inherit;
}

.fields hr {
    margin: 4px 0 5px -10px;
    border: none;
    border-top: 1px solid #c6c6c6;
}

.actions {
    display: flex;
    align-items: center;
    gap: 10px;
    height: 36px;
    padding: 0 11px 0 8px;
    border-top: 1px solid #c6c6c6;
}

.actions svg {
    margin-right: auto;
}

.actions button {
    width: 60px;
    height: 19px;
    border: 1px solid #b9b9b9;
    background-color: #e8e8e8;
    color: #666;
    font-size: 12px;
}

/* timeline */
.timeline {
    display: flex;
    align-items: center;
    height: 40px;
    padding: 0 12px 0 10px;
    border-top: 1px solid #d2d2d2;
    background-color: #f1f1f1;
}

.timeline .playback {
    display: flex;
    gap: 12px;
    padding-top: 8px;
}

.features {
    display: flex;
    align-self: flex-end;
    align-items: flex-start;
    height: 30px;
    margin-left: 19px;
}

.feature {
    width: 24px;
    height: 24px;
    margin-top: 2px;
}

.feature.active {
    border-radius: 2px;
    background-color: #0696d7;
}

.marker {
    margin-left: -6px;
}

.settings {
    margin: 8px 0 0 auto;
}
```
